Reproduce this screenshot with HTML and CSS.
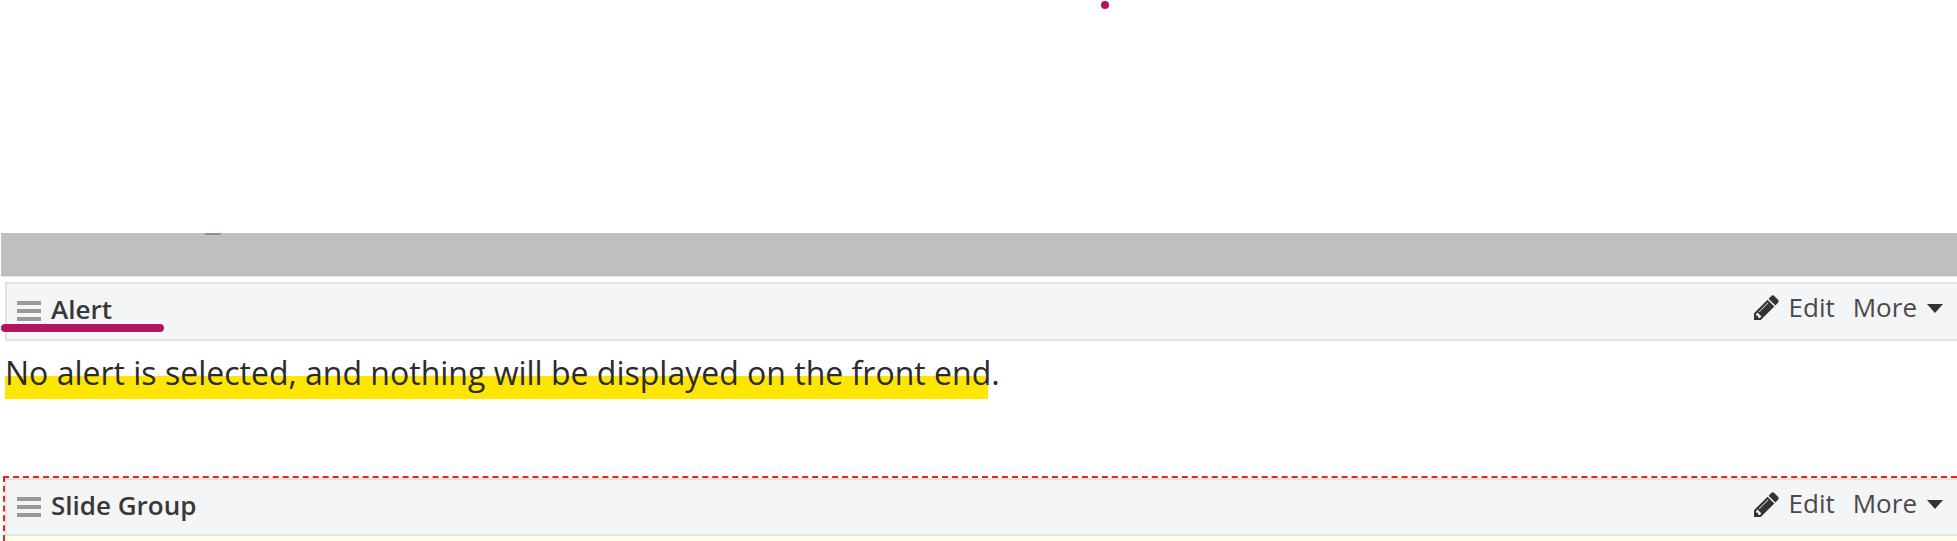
FILE: index.html
```html
<!DOCTYPE html>
<html lang="en">
<head>
<meta charset="utf-8">
<title>Alert</title>
<link rel="stylesheet" href="styles.css">
</head>
<body>
<span class="pen-dot"></span>
<div class="top-space"></div>
<div class="gray-bar"><span class="blot"></span></div>
<section class="block">
  <header class="block-head">
    <div class="block-title">
      <span class="drag"><i></i><i></i><i></i></span>
      <span class="title-text">Alert</span>
    </div>
    <div class="block-actions">
      <a class="action">
        <svg class="pencil" viewBox="128 128 1536 1536"><path d="M491 1536l91-91-235-235-91 91v107h128v128h107zm523-928q0-22-22-22-10 0-17 7l-542 542q-7 7-7 17 0 22 22 22 10 0 17-7l542-542q7-7 7-17zm-54-192l416 416-832 832h-416v-416zm683 96q0 53-37 90l-166 166-416-416 166-165q36-38 90-38 53 0 91 38l235 234q37 39 37 91z"/></svg>
        Edit
      </a>
      <a class="action">More <span class="caret"></span></a>
    </div>
  </header>
  <span class="pen-underline"></span>
  <p class="message"><span class="hl">No alert is selected, and nothing will be displayed on the front end</span>.</p>
</section>
<section class="group">
  <header class="block-head">
    <div class="block-title">
      <span class="drag"><i></i><i></i><i></i></span>
      <span class="title-text">Slide Group</span>
    </div>
    <div class="block-actions">
      <a class="action">
        <svg class="pencil" viewBox="128 128 1536 1536"><path d="M491 1536l91-91-235-235-91 91v107h128v128h107zm523-928q0-22-22-22-10 0-17 7l-542 542q-7 7-7 17 0 22 22 22 10 0 17-7l542-542q7-7 7-17zm-54-192l416 416-832 832h-416v-416zm683 96q0 53-37 90l-166 166-416-416 166-165q36-38 90-38 53 0 91 38l235 234q37 39 37 91z"/></svg>
        Edit
      </a>
      <a class="action">More <span class="caret"></span></a>
    </div>
  </header>
</section>
</body>
</html>
```
FILE: styles.css
```css
html, body {
  margin: 0;
  padding: 0;
  background: #fff;
  height: 541px;
  overflow: hidden;
}
body {
  position: relative;
  font-family: "Open Sans", "Noto Sans", sans-serif;
  color: #333;
}
.top-space { height: 233px; }
.gray-bar {
  position: relative;
  height: 43px;
  margin-left: 1px;
  background: #bfbfbf;
  border-bottom: 1px solid #e6e6e6;
}
.blot {
  position: absolute;
  left: 204px;
  top: 0;
  width: 16px;
  height: 2px;
  background: #8d8da6;
  border-radius: 1px;
}
.pen-dot {
  position: absolute;
  left: 1101px;
  top: 1px;
  width: 8px;
  height: 8px;
  border-radius: 50%;
  background: #b5135f;
}
.block {
  position: relative;
  margin: 5px 0 0 5px;
}
.block-head {
  display: flex;
  justify-content: space-between;
  align-items: center;
  box-sizing: border-box;
  height: 59px;
  padding: 0 14px 0 10px;
  background: #f4f5f7;
  border: 2px solid #e3e3e5;
  border-right: 0;
}
.block-title {
  display: flex;
  align-items: center;
  gap: 10px;
  margin-top: -5px;
}
.drag {
  display: flex;
  flex-direction: column;
  gap: 4px;
  width: 24px;
  margin-top: 3px;
}
.drag i {
  display: block;
  height: 4px;
  background: #999;
}
.title-text {
  font-size: 26px;
  font-weight: 600;
  line-height: 32px;
  color: #383838;
}
.block-actions {
  display: flex;
  align-items: center;
  gap: 18px;
  margin-top: -10px;
}
.action {
  display: flex;
  align-items: center;
  gap: 10px;
  font-size: 26px;
  line-height: 32px;
  color: #4a4a4a;
}
.pencil {
  width: 25px;
  height: 25px;
  fill: #333;
  margin-top: 2px;
}
.caret {
  width: 0;
  height: 0;
  margin-top: 3px;
  border-left: 8px solid transparent;
  border-right: 8px solid transparent;
  border-top: 9px solid #333;
}
.pen-underline {
  position: absolute;
  left: -4px;
  top: 42px;
  width: 163px;
  height: 8px;
  border-radius: 4px;
  background: #b5135f;
}
.message {
  margin: 11px 0 0;
  height: 124px;
  font-size: 32px;
  line-height: 41px;
  color: #2b2b2b;
}
.hl {
  position: relative;
  z-index: 0;
}
.hl::before {
  content: "";
  position: absolute;
  z-index: -1;
  left: 0;
  right: 3px;
  top: 25px;
  height: 23px;
  background: #ffe600;
}
.group {
  box-sizing: border-box;
  margin-left: 3px;
  border: 2px dashed #e0281e;
  border-right: 0;
  border-bottom: 0;
  background: #fffde8;
  height: 65px;
}
.group .block-head {
  height: 58px;
}
.group .block-title { margin-top: -4px; }
.group .block-actions { margin-top: -8px; }
```
